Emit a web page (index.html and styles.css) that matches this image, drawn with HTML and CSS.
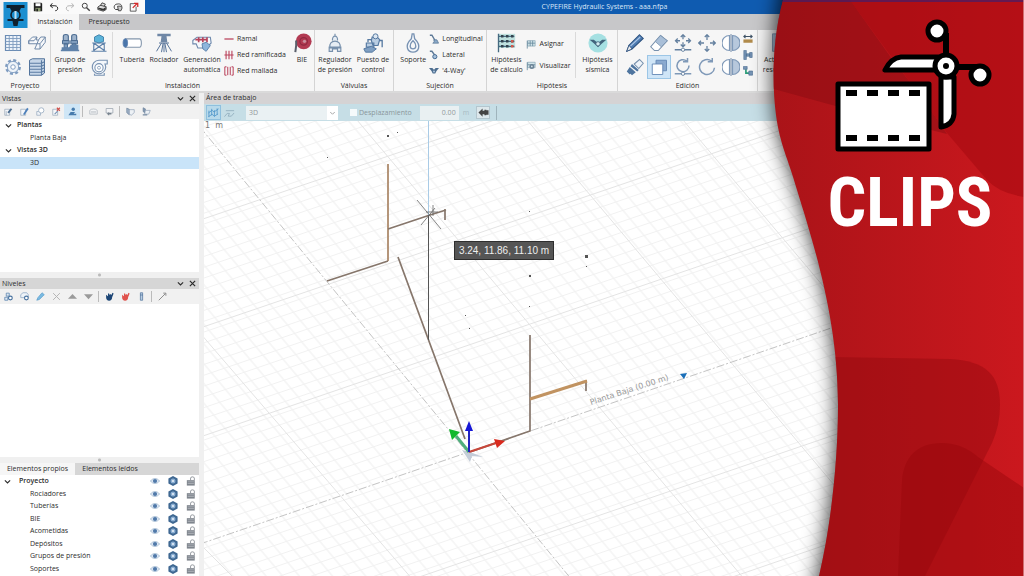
FILE: index.html
```html
<!DOCTYPE html>
<html lang="es">
<head>
<meta charset="utf-8">
<title>CYPEFIRE Hydraulic Systems - aaa.nfpa</title>
<link rel="stylesheet" href="styles.css">
</head>
<body>
<svg class="sprite" aria-hidden="true">
  <defs>
    <symbol id="save" viewBox="0 0 24 24"><path fill="#222" d="M2 2h18l2 2v18H2z"/><path fill="#fff" d="M6 3h12v7H6z"/><path fill="#8a9a70" d="M6 14h12v8H6z"/><path fill="#222" d="M8 16h4v6H8z"/></symbol>
    <symbol id="undo" viewBox="0 0 24 24"><path fill="none" stroke="#222" stroke-width="2.4" d="M8 3 3 9l6 5M3 9h11c9 0 9 12 1 12"/></symbol>
    <symbol id="redo" viewBox="0 0 24 24"><path fill="none" stroke="#b5b5b5" stroke-width="2.4" d="m16 3 5 6-6 5M21 9H10c-9 0-9 12-1 12"/></symbol>
    <symbol id="search" viewBox="0 0 24 24"><circle cx="9" cy="9" r="6" fill="none" stroke="#444" stroke-width="2.4"/><path stroke="#444" stroke-width="3.4" d="m13 13 8 8"/></symbol>
    <symbol id="print" viewBox="0 0 24 24"><path fill="#ddd" stroke="#333" stroke-width="2" d="M8 9 12 2l8 3-3 6M2 12l6-4 14 3v7l-7 4-13-4z"/><path fill="#333" d="m3 13 12 3 6-4v6l-6 3-12-4z"/></symbol>
    <symbol id="orbit" viewBox="0 0 24 24"><path fill="none" stroke="#444" stroke-width="2.4" d="M14 18H6C0 14 3 5 10 5c9-2 13 4 10 9"/><path fill="#ccc" stroke="#333" stroke-width="2" d="M11 10h8l3 4-3 7h-6z"/></symbol>
    <symbol id="export" viewBox="0 0 24 24"><path fill="none" stroke="#444" stroke-width="2" d="M12 4H3v18h14V11"/><path fill="none" stroke="#d32a2a" stroke-width="3" d="m9 14 11-11M12 3h9v9"/></symbol>
    <symbol id="sheet" viewBox="0 0 24 24"><path fill="#edf3fa" stroke="#6b8cb4" stroke-width="1.6" d="M2 2h20v20H2z"/><path stroke="#7f9cbe" stroke-width="1.2" d="M2 6h20M2 10h20M2 14h20M2 18h20M7 2v20M12 2v20M17 2v20"/></symbol>
    <symbol id="building" viewBox="0 0 24 24"><path fill="#f6f8fb" stroke="#7089a8" stroke-width="1.3" stroke-linejoin="round" d="M1 9 6 4h6l-1 4h3l3-4h6v7l-7 9H9l3-7H1zM1 9v4M1 9h7l4-5M14 8l-2 5h4l7-9M16 13v7"/></symbol>
    <symbol id="gear" viewBox="0 0 24 24"><circle cx="12" cy="12" r="9" fill="#eef3f9" stroke="#7f9cc0" stroke-width="3.2" stroke-dasharray="4 3.07"/><circle cx="12" cy="12" r="7.5" fill="#eef3f9" stroke="#7f9cc0" stroke-width="1.2"/><circle cx="12" cy="12" r="3" fill="#fff" stroke="#7f9cc0" stroke-width="1.3"/></symbol>
    <symbol id="stack" viewBox="0 0 24 24"><path fill="#c6d6e8" stroke="#4f7099" stroke-width="1.3" d="m2 3 4-2h16v19l-4 3H2z"/><path fill="none" stroke="#5c7ca3" stroke-width="1.5" d="M2 7h16l4-2M2 11h16l4-2M2 15h16l4-2M2 19h16l4-2M18 3v20"/></symbol>
    <symbol id="pumps" viewBox="0 0 24 24"><path fill="#9fb4cc" stroke="#4d6d92" stroke-width="1.4" d="M4 4c0-3 6-3 6 0v5H4zM14 4c0-3 6-3 6 0v5h-6z"/><path fill="#7f9cbd" stroke="#4d6d92" stroke-width="1.2" d="M3 9h8v4H3zM13 9h8v4h-8zM5 13h4v5H5zM15 13h4v5h-4z"/><path fill="#5f82aa" d="M2 17h9l2-3h9v6H2zM1 20h22v2H1z"/></symbol>
    <symbol id="tank" viewBox="0 0 24 24"><path fill="#5cb3d8" stroke="#3b7ea8" stroke-width="1.2" d="M6 4l6-3 6 3v6l-6 2-6-2z"/><path fill="none" stroke="#5f82aa" stroke-width="1.5" d="M5 12v11M19 12v11M3 12h18M5 12l14 10M19 12 5 22M2 23h20"/></symbol>
    <symbol id="turbine" viewBox="0 0 24 24"><path fill="#f4f7fb" stroke="#7892b2" stroke-width="1.5" d="M12 3h11v5h-3a9 9 0 1 1-8-5M6 21v2h13v-3"/><circle cx="12" cy="13" r="5.5" fill="#fff" stroke="#7892b2" stroke-width="1.4"/><circle cx="12" cy="13" r="2" fill="none" stroke="#7892b2"/></symbol>
    <symbol id="pipe" viewBox="0 0 24 24"><path fill="#fff" stroke="#8295ab" stroke-width="1.3" d="M4 7h17c3 0 3 10 0 10H4z"/><ellipse cx="4" cy="12" rx="2.7" ry="5" fill="#4a75aa" stroke="#5b80b0"/></symbol>
    <symbol id="sprinkler" viewBox="0 0 24 24"><path fill="#6f87a6" d="M4 1h16v3H4zM9 4h6l1 7H8z"/><path fill="none" stroke="#58749a" stroke-width="1.2" d="M6 12h12M9 12l-6 10M11 12 9 23M13 12l2 11M15 12l6 10M12 12v11"/></symbol>
    <symbol id="autogen" viewBox="0 0 24 24"><path fill="#f6f8fb" stroke="#6d88ac" stroke-width="1.3" d="m1 9 5-4h16l1 7-6 6H7l-2-5H1z"/><path fill="none" stroke="#b6435b" stroke-width="2" d="M4 8h14M8 5v6M13 5v6M18 5v6"/><path fill="#8db5dc" stroke="#4d77a5" d="m12 13 5-2 5 4-5 7-4-3z"/></symbol>
    <symbol id="branch" viewBox="0 0 24 24"><path stroke="#b8405a" stroke-width="3" d="M1 12h22"/></symbol>
    <symbol id="tree-net" viewBox="0 0 24 24"><path stroke="#b8405a" stroke-width="2.6" d="M1 12h22M5 2v20M12 2v20M19 2v20"/></symbol>
    <symbol id="mesh" viewBox="0 0 24 24"><path fill="none" stroke="#b8405a" stroke-width="2.4" d="M6 2H2v20h4M18 2h4v20h-4M9 2v20M15 2v20"/></symbol>
    <symbol id="hose" viewBox="0 0 24 24"><circle cx="14" cy="10" r="9.5" fill="#b23a52"/><circle cx="14" cy="10" r="4.5" fill="none" stroke="#8f2940" stroke-width="1.4"/><circle cx="15" cy="10" r="2" fill="#c9909e"/><path fill="none" stroke="#5a5f6b" stroke-width="2.4" d="M5 9v6l-1 8"/></symbol>
    <symbol id="regulator" viewBox="0 0 24 24"><path fill="#e6edf4" stroke="#7790ac" stroke-width="1.4" d="M12 1v3M9 9c-1-7 7-7 6 0M6 18c-3-11 15-11 12 0zM5 17h14v5h-4v-3H9v3H5z"/></symbol>
    <symbol id="control" viewBox="0 0 24 24"><path fill="#b9cde2" stroke="#577aa2" stroke-width="1.4" d="M11 5h6l3 3-2 7h-6l-2-6zM4 12h9v5H4z"/><path fill="#7f9fc2" stroke="#577aa2" stroke-width="1.2" d="m1 19 9-3 6 3-5 4H3z"/><circle cx="15" cy="4" r="3" fill="#dbe6f1" stroke="#577aa2" stroke-width="1.2"/><path fill="none" stroke="#577aa2" stroke-width="1.6" d="M20 9h3v8M6 11V8h4"/></symbol>
    <symbol id="hanger" viewBox="0 0 24 24"><path fill="#f4f7fb" stroke="#7892b2" stroke-width="1.6" d="M11 1h2l1 6c9 9 4 16-2 16S1 16 10 7zM12 9c-5 5-4 10 0 10s5-5 0-10"/></symbol>
    <symbol id="brace-l" viewBox="0 0 24 24"><path fill="none" stroke="#5c7896" stroke-width="3.4" d="M2 3h5l9 15"/><path fill="#8ba9c8" stroke="#4e6e90" stroke-width="1.6" d="M11 14h8l4 8H9c4-2 4-5 2-8"/></symbol>
    <symbol id="brace-t" viewBox="0 0 24 24"><path fill="none" stroke="#5c7896" stroke-width="3.4" d="M2 3h5l8 11"/><circle cx="14" cy="16" r="5" fill="#a8c1da" stroke="#456b95" stroke-width="2.4"/></symbol>
    <symbol id="brace-4" viewBox="0 0 24 24"><path fill="#4e6e90" d="M0 5h8l4 4 4-4h8l-6 7-3 6H9l-3-6z"/><circle cx="12" cy="13" r="2.5" fill="#a8c1da"/></symbol>
    <symbol id="hyp" viewBox="0 0 24 24"><path fill="#bfe0de" d="M3 1h20v17H3z"/><path stroke="#456a80" stroke-width="1.6" d="M3 1v22M3 4h19M3 10h19M3 16h19"/><path stroke="#34434e" stroke-width="3" stroke-dasharray="3 3" d="M6 4h16M6 10h16M6 16h10"/><path stroke="#d0584c" stroke-width="3" d="M18 10h3M18 16h3"/></symbol>
    <symbol id="assign" viewBox="0 0 24 24"><path fill="#d3e5ea" stroke="#7d9dad" stroke-width="1.5" d="M4 4h18v13H4z"/><path stroke="#66899c" stroke-width="2" d="M3 4v19M4 10h18M10 4v13M16 4v13"/></symbol>
    <symbol id="viewhyp" viewBox="0 0 24 24"><path fill="#d3e5ea" stroke="#7d9dad" stroke-width="1.5" d="M4 3h18v13H4z"/><path stroke="#66899c" stroke-width="2" d="M3 3v19M4 9h18"/><circle cx="14" cy="13" r="6" fill="#6c8496"/><circle cx="14" cy="13" r="2" fill="#dce8ef"/></symbol>
    <symbol id="seismic" viewBox="0 0 24 24"><circle cx="12" cy="12" r="11.5" fill="#a5e0e2"/><path fill="#42657c" d="M2 8h5l5 4 5-4h5l-7 6-3 3-3-3z"/><circle cx="12" cy="13" r="2.6" fill="#d2ecf0" stroke="#42657c"/></symbol>
    <symbol id="pencil" viewBox="0 0 24 24"><path fill="#4f7cb2" stroke="#2d527f" stroke-width="1.4" d="M18 1l5 5L8 20l-7 3 3-8z"/><path fill="#eee" stroke="#2d527f" d="m4 15 4 5-7 3z"/><path stroke="#a9c5e6" stroke-width="1.4" d="M6 16 19 4"/></symbol>
    <symbol id="eraser" viewBox="0 0 24 24"><path fill="#fff" stroke="#7790ac" stroke-width="1.4" d="M14 2l9 7-12 13H6l-5-5z"/><path fill="#a9bfd8" stroke="#7790ac" d="m14 2 9 7-8 8-8-7z"/></symbol>
    <symbol id="brush" viewBox="0 0 24 24"><path fill="#eef3f9" stroke="#7790ac" stroke-width="1.4" d="m11 8 7-6 5 5-6 7z"/><path fill="#4f759f" d="m8 8 9 8-2 2-9-7zM5 12l8 7-5 4-2-2-1 1-4-4z"/></symbol>
    <symbol id="copy" viewBox="0 0 24 24"><path fill="#8aa9cf" stroke="#6488b4" stroke-width="1.2" d="M8 3h14v14H8z"/><path fill="#fff" stroke="#6488b4" stroke-width="1.2" d="M3 8h14v14H3z"/></symbol>
    <symbol id="move" viewBox="0 0 24 24"><path fill="none" stroke="#64809f" stroke-width="1.7" d="M12 1v7M12 16v7M1 12h7M16 12h7M9 4l3-3 3 3M9 20l3 3 3-3M4 9l-3 3 3 3M20 9l3 3-3 3"/></symbol>
    <symbol id="move-pt" viewBox="0 0 24 24"><path fill="none" stroke="#64809f" stroke-width="1.7" d="M12 1v6M12 11v6M2 9h6M16 9h6M9 4l3-3 3 3M9 14l3 3 3-3M5 6 2 9l3 3M19 6l3 3-3 3M1 21h22"/><circle cx="12" cy="21" r="2.2" fill="#fff" stroke="#64809f" stroke-width="1.2"/></symbol>
    <symbol id="rotate" viewBox="0 0 24 24"><path fill="none" stroke="#7f99b8" stroke-width="2" d="M18 4a10 10 0 1 0 4 9M13 5h6V0"/></symbol>
    <symbol id="rotate-pt" viewBox="0 0 24 24"><path fill="none" stroke="#7f99b8" stroke-width="2" d="M17 4a8 8 0 1 0 3 6M12 5h6V0M1 21h22"/><circle cx="12" cy="21" r="2.2" fill="#fff" stroke="#64809f" stroke-width="1.2"/></symbol>
    <symbol id="mirror" viewBox="0 0 24 24"><path fill="#fff" stroke="#7f99b8" stroke-width="1.6" d="M10 2a10 10 0 0 0 0 20z"/><path fill="#b7c8dc" stroke="#7f99b8" stroke-width="1.6" d="M14 2a10 10 0 0 1 0 20z"/><path stroke="#64809f" stroke-width="1.2" d="M12 0v24"/></symbol>
    <symbol id="measure" viewBox="0 0 24 24"><path fill="#b08a4a" d="M1 13h22v8H1z"/><path fill="none" stroke="#3f5366" stroke-width="2.6" d="M2 6h20M6 2 2 6l4 4M18 2l4 4-4 4"/></symbol>
    <symbol id="join" viewBox="0 0 24 24"><path fill="#7593b4" stroke="#4c6d90" stroke-width="1.5" d="M2 1h6v22H2zM8 9h8v6H8zM16 6h6v12h-6z"/></symbol>
    <symbol id="link" viewBox="0 0 24 24"><path fill="none" stroke="#2b9c77" stroke-width="4" d="M7 8v9h8"/><path fill="#7593b4" stroke="#4c6d90" stroke-width="1.5" d="M1 1h9v7H1zM14 12h9v10h-9z"/></symbol>
    <symbol id="results" viewBox="0 0 24 24"><path fill="#a9bfd8" stroke="#7790ac" d="M3 1h18v21H3z"/><path stroke="#fff" stroke-width="2" d="M7 6h10M7 11h10M7 16h10"/></symbol>
    <symbol id="chev" viewBox="0 0 24 24"><path fill="none" stroke="currentColor" stroke-width="4" d="m3 8 9 9 9-9"/></symbol>
    <symbol id="close" viewBox="0 0 24 24"><path stroke="currentColor" stroke-width="4" d="m3 3 18 18M21 3 3 21"/></symbol>
    <symbol id="doc-new" viewBox="0 0 24 24"><path fill="#f5f7fa" stroke="#92a3b5" stroke-width="1.8" d="M2 6h13v16H2zM6 11v11"/><path fill="#4c6d90" d="m9 14 9-11 4 3-9 11z"/></symbol>
    <symbol id="doc-edit" viewBox="0 0 24 24"><path fill="#f5f7fa" stroke="#92a3b5" stroke-width="1.8" d="M2 6h13v16H2z"/><path fill="#4c7fba" d="M8 19 19 2l4 3-11 16z"/></symbol>
    <symbol id="doc-copy" viewBox="0 0 24 24"><path fill="#eef2f7" stroke="#8fa4bb" stroke-width="1.8" d="M2 12h10v10H2z"/><circle cx="14" cy="9" r="7" fill="#fff" stroke="#8fa4bb" stroke-width="2"/></symbol>
    <symbol id="doc-del" viewBox="0 0 24 24"><path fill="#f5f7fa" stroke="#92a3b5" stroke-width="1.8" d="M2 6h13v16H2z"/><path stroke="#d0504a" stroke-width="3" d="m13 2 8 8M21 2l-8 8"/><path stroke="#7590b0" stroke-width="3" d="m7 19 8-8"/></symbol>
    <symbol id="person" viewBox="0 0 24 24"><circle cx="14" cy="6" r="4.5" fill="#477cad"/><path fill="#477cad" d="M1 22 7 13h12l-4 5h7v4z"/></symbol>
    <symbol id="book" viewBox="0 0 24 24"><path fill="#f3f4f6" stroke="#a9b0b8" stroke-width="1.8" d="M2 19V9c4-5 16-5 20 0v10z"/><path stroke="#b8bec5" stroke-width="1.5" d="M5 12h14M5 15h14"/></symbol>
    <symbol id="screen" viewBox="0 0 24 24"><path fill="#f3f4f6" stroke="#9aa3ad" stroke-width="2" d="M3 4h18v12H3z"/><path fill="#78838e" d="m5 18 6-5v3h6v4h-6v3z"/></symbol>
    <symbol id="cube" viewBox="0 0 24 24"><path fill="#9db0c5" stroke="#6c829b" stroke-width="1.8" d="m2 3 7 3v15l-7-6z"/><path fill="#edf1f5" stroke="#8fa1b6" stroke-width="1.8" d="M9 7h13v8l-8 7-5-3z"/></symbol>
    <symbol id="cube2" viewBox="0 0 24 24"><path fill="#7f96ae" stroke="#6c829b" stroke-width="1.8" d="m3 2 6 3v12l-6-5z"/><path fill="#edf1f5" stroke="#8fa1b6" stroke-width="1.8" d="M9 9h13l-4 10H7z"/><path stroke="#6c829b" stroke-width="3" d="M2 21h12"/></symbol>
    <symbol id="levels" viewBox="0 0 24 24"><path fill="#dce7f2" stroke="#5a81ad" stroke-width="2" d="M2 14h8v8H2zM6 3h8v8H6z"/><circle cx="17" cy="16" r="5" fill="#fff" stroke="#47719f" stroke-width="3"/></symbol>
    <symbol id="level-add" viewBox="0 0 24 24"><path fill="#eef3f8" stroke="#8ba7c4" stroke-width="2" d="m2 7 6-5h10l4 5v8H2z"/><circle cx="17" cy="16" r="5" fill="#fff" stroke="#47719f" stroke-width="3"/></symbol>
    <symbol id="edit" viewBox="0 0 24 24"><path fill="#7bbbe3" stroke="#4b94c4" stroke-width="1.6" d="m16 2 6 5L9 20l-7 2 3-7z"/></symbol>
    <symbol id="cross" viewBox="0 0 24 24"><path stroke="#b4b4b4" stroke-width="2.6" d="m3 3 18 18M21 3 3 21"/></symbol>
    <symbol id="up" viewBox="0 0 24 24"><path fill="#9a9a9a" d="m0 18 12-13 12 13z"/></symbol>
    <symbol id="down" viewBox="0 0 24 24"><path fill="#9a9a9a" d="m0 6 12 13L24 6z"/></symbol>
    <symbol id="hand" viewBox="0 0 24 24"><path fill="currentColor" d="m3 7 5 4V4h3l1 4 2-3 3 3 3-6 3 2-4 10c0 6-3 9-8 9s-8-4-8-8z"/></symbol>
    <symbol id="tube" viewBox="0 0 24 24"><path fill="#b7cce2" stroke="#54779f" stroke-width="2" d="M9 2h6v20H9zM8 8h8"/></symbol>
    <symbol id="wand" viewBox="0 0 24 24"><path fill="none" stroke="#8c8c8c" stroke-width="2.6" d="M2 22 20 4M14 3h7v7"/></symbol>
    <symbol id="eye" viewBox="0 0 24 24"><path fill="#dce6f1" stroke="#9fb6cf" stroke-width="1.8" d="M1 12c6-8 16-8 22 0-6 8-16 8-22 0z"/><circle cx="12" cy="12" r="5" fill="#5079a9"/></symbol>
    <symbol id="hex" viewBox="0 0 24 24"><path fill="#3f6892" d="m12 0 11 6v12l-11 6-11-6V6z"/><circle cx="12" cy="12" r="6" fill="#8db0d4"/><circle cx="12" cy="12" r="2.6" fill="#e8f0f8"/></symbol>
    <symbol id="lock" viewBox="0 0 24 24"><path fill="none" stroke="#8a8f96" stroke-width="2.2" d="M11 10V5c0-4 9-4 9 0v5"/><path fill="#7f858d" d="M2 10h19v13H2z"/><path stroke="#b9bec4" stroke-width="1.6" d="M4 14h15M4 18h15"/></symbol>
    <symbol id="view3d" viewBox="0 0 24 24"><path fill="none" stroke="#5097c9" stroke-width="1.8" d="M2 8v14M8 4v14M14 7v14M20 3v14M1 13l8-6 4 4 10-7M1 21l8-5 5 4 8-5"/></symbol>
    <symbol id="view2d" viewBox="0 0 24 24"><path fill="none" stroke="#94b0bf" stroke-width="2" d="M1 21l6-7h5l-3 6h7l6-7M4 8h18"/></symbol>
    <symbol id="arrow-l" viewBox="0 0 24 24"><path fill="#444" d="m1 12 9-9v5h4v8h-4v5zM14 6h4v12h-4zM18 7h5v10h-5z"/></symbol>
  </defs>
</svg>

<div class="app">
  <header class="top">
    <button class="logo" aria-label="CYPEFIRE">
      <svg class="logo-art" viewBox="0 0 24 26"><path fill="#1b8fd0" d="M0 0h24v26H0z"/><path fill="#10202c" d="M3 3h18v3H3zM6 5h12l-2 4H8zM8 8h3v4H8zM13 8h3v4h-3zM4 17h16v2H4zM9 19h6l-1 5h-4z"/><circle cx="12" cy="13" r="4.5" fill="#1b8fd0" stroke="#10202c" stroke-width="1.6"/><path fill="#bfe0f2" d="M11 9h2v8h-2z"/></svg>
    </button>
    <div class="title-row">
      <div class="quick">
        <button aria-label="Guardar"><svg><use href="#save"/></svg></button>
        <button aria-label="Deshacer"><svg><use href="#undo"/></svg></button>
        <button aria-label="Rehacer"><svg><use href="#redo"/></svg></button>
        <button aria-label="Buscar"><svg><use href="#search"/></svg></button>
        <button aria-label="Imprimir"><svg><use href="#print"/></svg></button>
        <button aria-label="Orbitar"><svg><use href="#orbit"/></svg></button>
        <button aria-label="Exportar"><svg><use href="#export"/></svg></button>
      </div>
      <div class="title">CYPEFIRE Hydraulic Systems - aaa.nfpa</div>
    </div>
    <nav class="tabs">
      <button class="tab active">Instalación</button>
      <button class="tab">Presupuesto</button>
    </nav>
  </header>

  <div class="ribbon">
    <section class="group g-project">
      <div class="tools grid2">
        <button aria-label="Tabla"><svg><use href="#sheet"/></svg></button>
        <button aria-label="Edificio"><svg><use href="#building"/></svg></button>
        <button aria-label="Opciones"><svg><use href="#gear"/></svg></button>
        <button aria-label="Capas"><svg><use href="#stack"/></svg></button>
      </div>
      <h2>Proyecto</h2>
    </section>
    <section class="group g-install">
      <div class="tools">
        <button class="big w-38"><svg><use href="#pumps"/></svg>Grupo de<br>presión</button>
        <div class="pair">
          <button aria-label="Depósito"><svg><use href="#tank"/></svg></button>
          <button aria-label="Bomba"><svg><use href="#turbine"/></svg></button>
        </div>
        <i class="rule"></i>
        <button class="big w-32"><svg><use href="#pipe"/></svg>Tubería</button>
        <button class="big w-32"><svg><use href="#sprinkler"/></svg>Rociador</button>
        <button class="big w-44"><svg><use href="#autogen"/></svg>Generación<br>automática</button>
        <div class="list three w-66">
          <button><svg><use href="#branch"/></svg>Ramal</button>
          <button><svg><use href="#tree-net"/></svg>Red ramificada</button>
          <button><svg><use href="#mesh"/></svg>Red mallada</button>
        </div>
        <button class="big w-24"><svg><use href="#hose"/></svg>BIE</button>
      </div>
      <h2>Instalación</h2>
    </section>
    <section class="group g-valves">
      <div class="tools">
        <button class="big w-38"><svg><use href="#regulator"/></svg>Regulador<br>de presión</button>
        <button class="big w-38"><svg><use href="#control"/></svg>Puesto de<br>control</button>
      </div>
      <h2>Válvulas</h2>
    </section>
    <section class="group g-hold">
      <div class="tools">
        <button class="big w-32"><svg><use href="#hanger"/></svg>Soporte</button>
        <div class="list three">
          <button><svg><use href="#brace-l"/></svg>Longitudinal</button>
          <button><svg><use href="#brace-t"/></svg>Lateral</button>
          <button><svg><use href="#brace-4"/></svg>'4-Way'</button>
        </div>
      </div>
      <h2>Sujeción</h2>
    </section>
    <section class="group g-hyp">
      <div class="tools">
        <button class="big w-38"><svg><use href="#hyp"/></svg>Hipótesis<br>de cálculo</button>
        <div class="list two">
          <button><svg><use href="#assign"/></svg>Asignar</button>
          <button><svg><use href="#viewhyp"/></svg>Visualizar</button>
        </div>
        <i class="rule"></i>
        <button class="big w-38"><svg><use href="#seismic"/></svg>Hipótesis<br>sísmica</button>
      </div>
      <h2>Hipótesis</h2>
    </section>
    <section class="group g-edit">
      <div class="tools">
        <div class="grid5">
          <button aria-label="Editar"><svg><use href="#pencil"/></svg></button>
          <button aria-label="Borrar"><svg><use href="#eraser"/></svg></button>
          <button aria-label="Mover con punto"><svg><use href="#move-pt"/></svg></button>
          <button aria-label="Mover"><svg><use href="#move"/></svg></button>
          <button aria-label="Simetría"><svg><use href="#mirror"/></svg></button>
          <button aria-label="Asignar formato"><svg><use href="#brush"/></svg></button>
          <button aria-label="Copiar" class="on"><svg><use href="#copy"/></svg></button>
          <button aria-label="Girar con punto"><svg><use href="#rotate-pt"/></svg></button>
          <button aria-label="Girar"><svg><use href="#rotate"/></svg></button>
          <button aria-label="Simetría con copia"><svg><use href="#mirror"/></svg></button>
        </div>
        <div class="list three">
          <button aria-label="Medir"><svg><use href="#measure"/></svg></button>
          <button aria-label="Unir"><svg><use href="#join"/></svg></button>
          <button aria-label="Enlazar"><svg><use href="#link"/></svg></button>
        </div>
      </div>
      <h2>Edición</h2>
    </section>
    <section class="group g-calc">
      <div class="tools">
        <button class="big w-44"><svg><use href="#results"/></svg>Actualizar<br>resultados</button>
      </div>
    </section>
  </div>

  <div class="body">
    <aside class="side">
      <section class="panel">
        <div class="head"><h3>Vistas</h3><button aria-label="Contraer"><svg><use href="#chev"/></svg></button><button aria-label="Cerrar"><svg><use href="#close"/></svg></button></div>
        <div class="bar">
          <button aria-label="Nueva"><svg><use href="#doc-new"/></svg></button>
          <button aria-label="Editar"><svg><use href="#doc-edit"/></svg></button>
          <button aria-label="Copiar"><svg><use href="#doc-copy"/></svg></button>
          <button aria-label="Borrar"><svg><use href="#doc-del"/></svg></button>
          <button aria-label="Abrir" class="on"><svg><use href="#person"/></svg></button>
          <i></i>
          <button aria-label="Libro"><svg><use href="#book"/></svg></button>
          <button aria-label="Pantalla"><svg><use href="#screen"/></svg></button>
          <i></i>
          <button aria-label="Vista"><svg><use href="#cube"/></svg></button>
          <button aria-label="Referencia"><svg><use href="#cube2"/></svg></button>
        </div>
        <ul class="tree four">
          <li class="root"><svg><use href="#chev"/></svg>Plantas</li>
          <li>Planta Baja</li>
          <li class="root"><svg><use href="#chev"/></svg>Vistas 3D</li>
          <li class="sel">3D</li>
        </ul>
      </section>
      <div class="grip"></div>
      <section class="panel">
        <div class="head"><h3>Niveles</h3><button aria-label="Contraer"><svg><use href="#chev"/></svg></button><button aria-label="Cerrar"><svg><use href="#close"/></svg></button></div>
        <div class="bar">
          <button aria-label="Niveles"><svg><use href="#levels"/></svg></button>
          <button aria-label="Añadir"><svg><use href="#level-add"/></svg></button>
          <button aria-label="Editar"><svg><use href="#edit"/></svg></button>
          <button aria-label="Borrar"><svg><use href="#cross"/></svg></button>
          <button aria-label="Subir"><svg><use href="#up"/></svg></button>
          <button aria-label="Bajar"><svg><use href="#down"/></svg></button>
          <i></i>
          <button aria-label="Mostrar" class="navy"><svg><use href="#hand"/></svg></button>
          <button aria-label="Ocultar" class="coral"><svg><use href="#hand"/></svg></button>
          <button aria-label="Tubo"><svg><use href="#tube"/></svg></button>
          <i></i>
          <button aria-label="Herramienta"><svg><use href="#wand"/></svg></button>
        </div>
      </section>
      <div class="grip"></div>
      <section class="elements">
        <div class="side-tabs"><button class="active">Elementos propios</button><button>Elementos leídos</button></div>
        <ul class="tree eight">
          <li class="root"><svg><use href="#chev"/></svg><span>Proyecto</span><svg><use href="#eye"/></svg><svg><use href="#hex"/></svg><svg><use href="#lock"/></svg></li>
          <li><span>Rociadores</span><svg><use href="#eye"/></svg><svg><use href="#hex"/></svg><svg><use href="#lock"/></svg></li>
          <li><span>Tuberías</span><svg><use href="#eye"/></svg><svg><use href="#hex"/></svg><svg><use href="#lock"/></svg></li>
          <li><span>BIE</span><svg><use href="#eye"/></svg><svg><use href="#hex"/></svg><svg><use href="#lock"/></svg></li>
          <li><span>Acometidas</span><svg><use href="#eye"/></svg><svg><use href="#hex"/></svg><svg><use href="#lock"/></svg></li>
          <li><span>Depósitos</span><svg><use href="#eye"/></svg><svg><use href="#hex"/></svg><svg><use href="#lock"/></svg></li>
          <li><span>Grupos de presión</span><svg><use href="#eye"/></svg><svg><use href="#hex"/></svg><svg><use href="#lock"/></svg></li>
          <li><span>Soportes</span><svg><use href="#eye"/></svg><svg><use href="#hex"/></svg><svg><use href="#lock"/></svg></li>
        </ul>
      </section>
    </aside>

    <main class="work">
      <h3>Área de trabajo</h3>
      <div class="work-bar">
        <button class="on" aria-label="Vista 3D"><svg><use href="#view3d"/></svg></button>
        <button aria-label="Vista 2D"><svg><use href="#view2d"/></svg></button>
        <div class="combo"><select aria-label="Vista activa" disabled><option>3D</option></select><svg><use href="#chev"/></svg></div>
        <label class="check"><input type="checkbox" disabled>Desplazamiento</label>
        <input class="num" type="text" value="0.00" aria-label="Desplazamiento en metros" disabled>
        <span class="unit">m</span>
        <button class="back" aria-label="Volver"><svg><use href="#arrow-l"/></svg></button>
        <i></i>
      </div>
      <div class="stage">
        <svg class="scene" role="img" aria-label="Vista 3D de la instalación">
          <defs>
            <pattern id="minor" width="1" height="1" patternUnits="userSpaceOnUse" patternTransform="matrix(12.9 -4.41 7.05 8.39 265 331)">
              <path fill="none" stroke="#f1f1f1" stroke-width=".09" d="M0 .5h1M.5 0v1"/>
            </pattern>
          </defs>
          <rect width="100%" height="100%" fill="url(#minor)"/>
          <g transform="translate(-204 -121)">
            <path fill="none" stroke="#e4e4e4" d="M200 220 680 57M200 328 840 110M200 437 840 218M200 652 840 433M200 760 840 540M200 544 236 580M200 333 413 580M357 120 745 580M527 120 840 492M683 120 840 306"/>
            <path fill="none" stroke="#c4c4c4" stroke-dasharray="8 2 2 2" d="M200 544 840 325M200 127 572 580"/>
            <g fill="none" stroke="#86766b" stroke-width="1.7">
              <path stroke="#a88464" d="M388 164v97"/>
              <path d="M388 261 327 281M388 229l42-14 16-5M445 209v11M398 257l67 182M530 335v96l-60 21M586 380v11"/>
            </g>
            <path stroke="#c19361" stroke-width="3.4" d="m530 399 57-18"/>
            <path stroke="#a9cbe6" d="M428.500 121v94"/>
            <path stroke="#555" d="M428.500 215v125"/>
            <path stroke="#666" stroke-width=".8" d="m417 200 24 29M421 225l14-17M426 212h12M433 205v11"/>
            <path fill="#555" d="M387 135h2v2h-2zM397 132h1v1h-1zM327 157h1v1h-1zM529 211h1v1h-1zM585 255h3v3h-3zM586 266h1v1h-1zM529 275h2v2h-2zM529 306h1v1h-1zM465 315h1v1h-1zM469 328h1v1h-1z"/>
            <path fill="#c3ccd8" d="m462 450 8 12 2-6 11 1-13-5z"/>
            <path stroke="#c8473a" stroke-width="2" d="m469 452 27-9"/><path fill="#d92a1e" d="m494 439 11 2-8 7z"/>
            <path stroke="#4fae7c" stroke-width="3" d="m469 452-13-16"/><path fill="#12b92e" d="m449 429 11 3-8 8z"/>
            <path stroke="#2222c0" stroke-width="2" d="M469 452v-22"/><path fill="#1717d6" d="m469 421 4 10h-8z"/>
            <path fill="#1b6fb8" d="m680 374 7-1-3 6z"/>
            <text class="axis-label" transform="translate(591 405) rotate(-18)">Planta Baja (0.00 m)</text>
          </g>
        </svg>
        <span class="scale">1&nbsp; m</span>
        <output class="coords">3.24, 11.86, 11.10 m</output>
      </div>
    </main>
  </div>

  <aside class="cover">
    <svg class="cover-bg" viewBox="0 0 284 576" preserveAspectRatio="xMaxYMin meet" aria-hidden="true">
      <defs>
        <linearGradient id="red"><stop offset=".1" stop-color="#a91318"/><stop offset="1" stop-color="#cb181e"/></linearGradient>
        <filter id="soft" x="-30%" width="160%"><feGaussianBlur stdDeviation="10"/></filter>
        <clipPath id="edge"><path d="M43 0C32 40 32 85 36 115C40 145 48 158 57 190C74 245 98 320 98 405C98 465 90 530 79 576H284V0z"/></clipPath>
      </defs>
      <path fill="#000" fill-opacity=".75" filter="url(#soft)" d="M42 -20C31 40 31 85 35 115C39 145 47 158 56 190C73 245 96 320 96 405C96 465 88 530 72 600H284V-20z"/>
      <g clip-path="url(#edge)">
        <path fill="url(#red)" d="M0 0h284v576H0z"/>
        <path fill="#8a0c12" fill-opacity=".5" d="M0 0h110l42 59q35 45 55 75L92 105 30 88z"/>
        <path fill="#a60a10" fill-opacity=".6" d="M110 0h174v197q-25-4-37-17l-40-47z"/>
        <path fill="#8f070c" fill-opacity=".4" d="M90 357l120 2c35 2 50 15 50 46q0 20-8 38L185 576H60z"/>
        <path fill="#96060b" fill-opacity=".45" d="M158 576l4-95c2-24 15-38 40-38q20 0 36 14l46 31v88z"/>
        <path fill="#30207a" fill-opacity=".6" d="M0 0h284v2H0z"/>
        <path fill="#d99" fill-opacity=".7" d="M283 0h1v576h-1z"/>
      </g>
    </svg>
    <div class="brand">
      <svg class="clip-art" viewBox="-4 1 160 134" aria-hidden="true">
        <path fill="#fff" stroke="#000" stroke-width="5" stroke-linejoin="round" d="M4 65h91v65H4z"/>
        <path fill="#000" d="M12 71h11v6H12zM33 71h11v6H33zM54 71h11v6H54zM75 71h11v6H75zM12 116h11v6H12zM33 116h11v6H33zM54 116h11v6H54zM75 116h11v6H75z"/>
        <path fill="none" stroke="#000" stroke-width="6" d="M112 46V14M112 48h34"/>
        <path fill="#fff" stroke="#000" stroke-width="5" stroke-linejoin="round" d="M104 38H67Q57 39 51 51H104zM107 58v50q12-2 13-13V58z"/>
        <circle cx="103" cy="12" r="9" fill="#fff" stroke="#000" stroke-width="5"/>
        <circle cx="146" cy="56" r="9" fill="#fff" stroke="#000" stroke-width="5"/>
        <circle cx="112" cy="47" r="11" fill="#fff" stroke="#000" stroke-width="5"/><circle cx="112" cy="47" r="3" fill="#000"/>
      </svg>
      <h1>CLIPS</h1>
    </div>
  </aside>
</div>
</body>
</html>
```

FILE: styles.css
```css
* { box-sizing: border-box; }
body { margin: 0; font: 7px/10px "Open Sans", "Noto Sans", sans-serif; color: #2c2c2c; background: #f0f0f0; }
h1, h2, h3, ul { margin: 0; padding: 0; font: inherit; }
ul { list-style: none; }
button { display: flex; align-items: center; justify-content: center; padding: 0; border: 0; background: none; font: inherit; color: inherit; }
svg { display: block; flex: none; }
.sprite { position: absolute; width: 0; height: 0; }
.app { position: relative; display: flex; flex-direction: column; height: 100vh; min-height: 480px; overflow: hidden; }

.top { display: grid; grid-template-columns: 31px 1fr; grid-template-rows: 14px 16px; background: #c7c7c9; }
.logo { grid-row: 1 / 3; background: #f4f4f4; }
.logo-art { width: 25px; height: 26px; }
.title-row { display: flex; background: #0f5bb0; }
.quick { display: flex; align-items: center; gap: 6px; width: 114px; padding-left: 2px; background: #fafafa; }
.quick svg { width: 10px; height: 10px; }
.title { flex: 1; padding-left: 40px; text-align: center; line-height: 13px; color: #dce8f8; }
.tabs { display: flex; }
.tab { width: 48px; }
.tab + .tab { width: 60px; }
.tab.active { background: #f6f6f6; }

.ribbon { display: flex; height: 63px; background: #f6f6f6; border-bottom: 2px solid #dadada; overflow: hidden; }
.group { display: flex; flex: none; flex-direction: column; border-right: 1px solid #d4d4d4; }
.group h2 { text-align: center; line-height: 11px; }
.tools { display: flex; height: 50px; justify-content: center; }
.g-project { width: 51px; }
.g-install { width: 264px; }
.g-valves { width: 79px; }
.g-hold { width: 93px; }
.g-hyp { width: 131px; }
.g-edit { width: 140px; }
.g-calc { flex: 1; }
.g-calc .tools { justify-content: flex-start; }
.big { flex-direction: column; justify-content: flex-start; flex: none; padding-top: 3px; line-height: 10px; white-space: nowrap; }
.big svg { width: 20px; height: 20px; margin-bottom: 2px; }
.w-24 { width: 24px; }
.w-32 { width: 32px; }
.w-38 { width: 38px; }
.w-44 { width: 44px; }
.w-66 { width: 66px; }
.grid2 { display: grid; grid-template-columns: 24px 24px; grid-template-rows: 24px 24px; padding-top: 1px; }
.grid2 svg, .pair svg { width: 18px; height: 18px; }
.pair { display: grid; grid-template: 24px 24px / 20px; padding-top: 1px; }
.rule { flex: none; width: 1px; height: 46px; margin: 2px 3px; background: #dadada; }
.list { display: grid; align-content: start; white-space: nowrap; }
.list button { justify-content: flex-start; gap: 3px; }
.list svg { width: 10px; height: 10px; }
.three { grid-auto-rows: 16px; padding-top: 1px; }
.two { grid-auto-rows: 22px; padding: 3px 1px; }
.grid5 { display: grid; grid-template: 24px 24px / repeat(5, 24px); padding-top: 1px; }
.grid5 svg { width: 18px; height: 18px; }
.grid5 .on { background: #cfe5f7; border: 1px solid #9cc6e6; }

.body { display: flex; flex: 1; min-height: 0; }
.side { display: flex; flex: none; flex-direction: column; width: 199px; background: #fff; }
.panel { display: flex; flex: 1; flex-direction: column; }
.head { display: flex; align-items: center; gap: 5px; height: 11px; padding: 0 3px 0 2px; background: #d6d6d6; }
.head h3 { flex: 1; }
.head svg { width: 7px; height: 7px; }
.bar { display: flex; align-items: center; height: 15px; background: #f1f1f1; }
.bar button { width: 16px; height: 15px; }
.bar svg { width: 9px; height: 9px; }
.bar .on { background: #cfe6f6; }
.bar i { width: 1px; height: 11px; margin: 0 2px; background: #bbb; }
.navy { color: #1d4676; }
.coral { color: #e0524c; }
.grip { flex: none; height: 6px; background: radial-gradient(circle, #bbb 1px, #f0f0f0 2px); }
.tree { display: grid; background: #fff; }
.four { height: 50px; grid-template-rows: repeat(4, 1fr); }
.eight { height: 101px; padding-bottom: 1px; grid-template-rows: repeat(8, 1fr); }
.tree li { display: flex; align-items: center; gap: 8px; padding: 0 3px 0 30px; }
.tree li.root { gap: 5px; padding-left: 5px; font-weight: 600; }
.root svg:first-child { width: 7px; height: 7px; }
.sel { background: #c9e4f9; }
.eight li span { flex: 1; }
.eight li span ~ svg { width: 10px; height: 10px; }
.tree.eight li.root { gap: 8px; padding-left: 4px; }
.side-tabs { display: flex; height: 12px; background: #d6d6d6; }
.side-tabs button { width: 70px; white-space: nowrap; }
.side-tabs .active { width: 75px; background: #f6f6f6; }

.work { display: flex; flex: 1; flex-direction: column; margin-left: 5px; background: #fff; }
.work h3 { height: 11px; padding-left: 2px; background: #d5d3d4; }
.work-bar { display: flex; align-items: center; height: 17px; padding-left: 2px; background: #c6dee6; color: #8a969b; }
.work-bar button { width: 15px; height: 15px; margin-right: 1px; }
.work-bar button svg { width: 11px; height: 11px; }
.work-bar .on { border: 1px solid #8fc0de; background: #b8d9ea; }
.combo { display: flex; align-items: center; width: 92px; height: 14px; margin-left: 8px; background: #eaf1f3; }
.combo select { flex: 1; align-self: stretch; padding: 0 3px; border: 0; background: none; appearance: none; font: inherit; color: #92989b; opacity: 1; }
.combo svg { width: 11px; height: 14px; padding: 4px 2px; background: #fff; color: #aaa; }
.check { display: flex; align-items: center; gap: 2px; margin-left: 12px; }
.check input { appearance: none; width: 7px; height: 7px; margin: 0; background: #f5fafb; }
.num { width: 39px; height: 14px; margin-left: 8px; padding: 0 3px; border: 0; background: #e9f0f2; text-align: right; font: inherit; color: #92989b; }
.unit { margin: 0 7px 0 4px; color: #a9bcc4; }
.work-bar .back { width: 14px; height: 13px; background: #dde8ec; border: 1px solid #b4c6ce; }
.work-bar i { width: 1px; height: 14px; margin-left: 5px; background: #9fb4bc; }
.stage { position: relative; flex: 1; overflow: hidden; }
.scene { position: absolute; inset: 0; width: 100%; height: 100%; }
.scale { position: absolute; left: 1px; top: 0; font: 8px/10px "DejaVu Sans", sans-serif; color: #777; }
.axis-label { font: 8px "DejaVu Sans", sans-serif; fill: #999; }
.coords { position: absolute; left: 250px; top: 120px; width: 100px; text-align: center; font: 10px/17px "Liberation Sans", Arial, sans-serif; color: #eee; background: #555; border: 1px solid #2e2e2e; }

.cover { position: absolute; top: 0; right: 0; height: 100%; aspect-ratio: 284 / 576; }
.cover-bg { position: absolute; inset: 0; width: 100%; height: 100%; overflow: visible; }
.brand { position: relative; display: flex; flex-direction: column; align-items: center; padding: 20px 0 0 56px; }
.clip-art { width: 160px; height: 134px; overflow: visible; }
.brand h1 { margin-top: 15px; font: bold 68px/68px "Roboto Condensed", "Liberation Sans Narrow", Roboto, sans-serif; color: #fff; }
```
